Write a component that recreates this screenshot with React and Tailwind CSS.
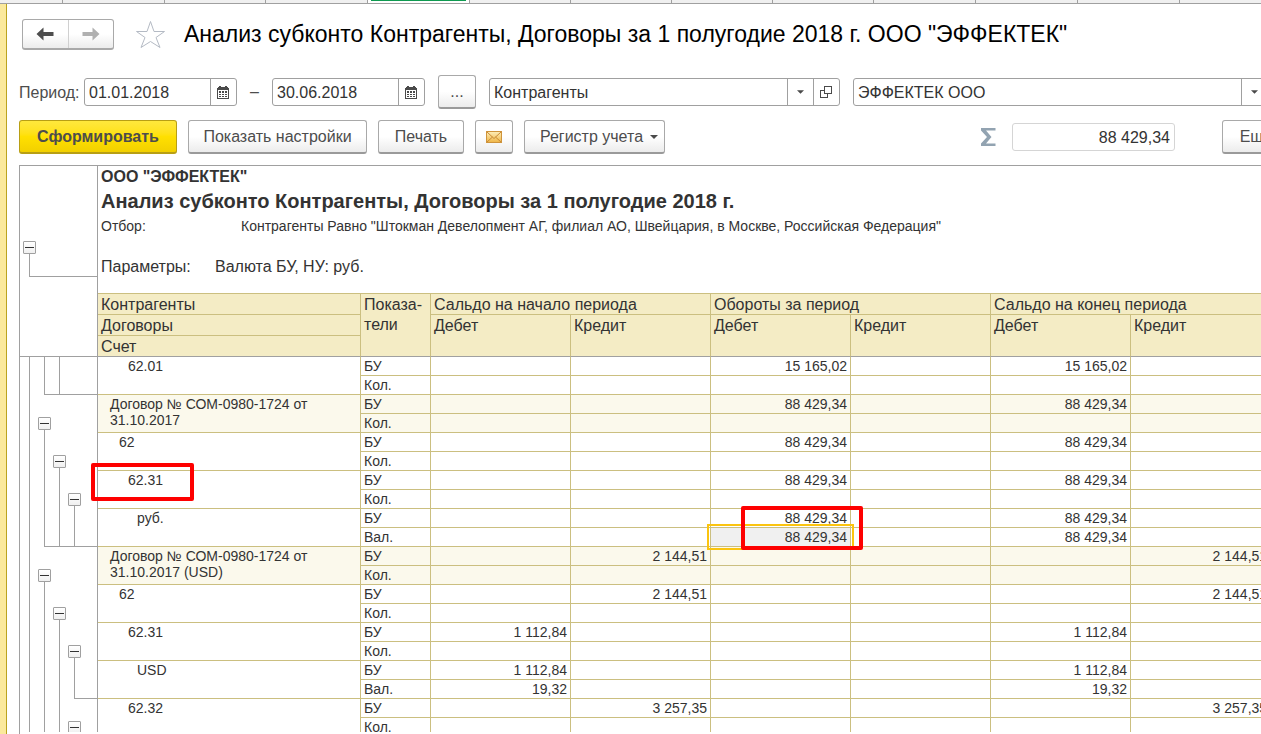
import React from 'react';

const tabs = [62, 101, 100, 101, 101, 100, 100, 100, 100, 101, 101, 101, 101];

const raised =
  'flex shrink-0 items-center justify-center rounded-[3px] border border-[#a9a9a9] border-b-2 border-b-[#9a9a9a] bg-linear-to-b from-white from-50% to-[#ececec] text-[#4d4d4d]';

function ArrowIcon({ className, flip }) {
  return (
    <svg viewBox="0 0 18 14" className={className} width="18" height="14" aria-hidden="true">
      <path
        d="M0.5 7 L7.5 0.5 V5 H17.5 V9 H7.5 V13.5 Z"
        fill="currentColor"
        transform={flip ? 'translate(18 0) scale(-1 1)' : undefined}
      />
    </svg>
  );
}

function CalendarIcon() {
  return (
    <svg width="12" height="13" viewBox="0 0 12 13" fill="#4a4a4a" shapeRendering="crispEdges" aria-hidden="true">
      <path d="M0 2h1V1h1V0h2v1h4V0h2v1h1v1h1v11H0z" />
      <path d="M1 4h10v8H1z" fill="#fff" />
      <path d="M2 5h2v2H2zM5 5h2v2H5zM8 5h2v2H8zM2 8h2v1H2zM5 8h2v1H5zM8 8h2v1H8zM2 10h2v1H2zM5 10h2v1H5zM8 10h2v1H8z" />
    </svg>
  );
}

function Caret({ small }) {
  return (
    <svg width={small ? 7 : 8} height="4" viewBox="0 0 8 4" fill="#4a4a4a" aria-hidden="true">
      <path d="M0 0h8L4 4z" />
    </svg>
  );
}

function OpenIcon() {
  return (
    <svg width="12" height="12" viewBox="0 0 12 12" fill="none" stroke="#4a4a4a" shapeRendering="crispEdges" aria-hidden="true">
      <path d="M4.5 0.5h7v7h-7zM4 4.5H0.500v7h7V8" />
    </svg>
  );
}

function MailIcon() {
  return (
    <svg width="16" height="12" viewBox="0 0 16 12" aria-hidden="true">
      <defs>
        <linearGradient id="mail" x1="0" y1="0" x2="0" y2="1">
          <stop offset="0" stopColor="#fdeeba" />
          <stop offset="1" stopColor="#efb545" />
        </linearGradient>
      </defs>
      <rect x="0.500" y="0.500" width="15" height="11" fill="url(#mail)" stroke="#cf943b" />
      <path d="M1 1l7 6.500L15 1M1 11l5.500-5M15 11l-5.500-5" fill="none" stroke="#c98a35" />
    </svg>
  );
}

function DateField({ id, value, label }) {
  return (
    <div className="flex h-[28px] w-[153px] shrink-0 rounded-[3px] border border-[#a0a0a0] bg-white">
      <input id={id} aria-label={label} defaultValue={value} className="w-0 min-w-0 flex-1 px-1 pt-px text-[16px] text-[#333] outline-none" />
      <button type="button" aria-label="Выбрать дату" className="flex w-[26px] items-center justify-center border-l border-[#a0a0a0] pr-px">
        <CalendarIcon />
      </button>
    </div>
  );
}

function Combo({ label, value, open, className }) {
  return (
    <div className={'flex h-[28px] shrink-0 rounded-[3px] border border-[#a0a0a0] bg-white ' + className}>
      <div className="grid min-w-0 flex-1 grid-cols-[1fr_26px]">
        <select aria-label={label} className="col-span-2 col-start-1 row-start-1 appearance-none px-1 pt-px text-[16px] text-[#333] outline-none">
          <option>{value}</option>
        </select>
        <span className="pointer-events-none col-start-2 row-start-1 flex items-center justify-center border-l border-[#a0a0a0]">
          <Caret small />
        </span>
      </div>
      {open && (
        <button type="button" aria-label="Открыть" className="flex w-[26px] items-center justify-center border-l border-[#a0a0a0] pr-px">
          <OpenIcon />
        </button>
      )}
    </div>
  );
}

function Toggle() {
  return (
    <button
      type="button"
      aria-label="Свернуть группу"
      className="flex size-[13px] shrink-0 items-center justify-center rounded-[1px] border border-[#a0a0a0] bg-linear-to-b from-white to-[#f0f0f0]"
    >
      <span className="h-px w-[9px] bg-[#333]" />
    </button>
  );
}

/* Tree slots: "|" line, "T" toggle, "L" line ending in a corner, "+" line crossing the foot, "_" foot only, " " empty */
function Slot({ kind }) {
  if (kind === 'T') {
    return (
      <div className="flex w-[15px] flex-col items-center justify-end">
        <Toggle />
        <span className="h-[3px] w-px bg-[#a0a0a0]" />
      </div>
    );
  }
  const foot = kind === '+' || kind === '_';
  return (
    <div className="flex w-[15px]">
      <span className={'w-[7px] ' + (foot ? 'border-b border-[#a0a0a0]' : '')} />
      <span
        className={
          'w-[8px] border-[#a0a0a0] ' +
          (kind === '|' || kind === 'L' || kind === '+' ? 'border-l ' : '') +
          (foot || kind === 'L' ? 'border-b' : '')
        }
      />
    </div>
  );
}

function Tree({ slots }) {
  const foot = /[L+_]/.test(slots);
  return (
    <div className="flex h-[38px] pl-[2px]">
      {slots.split('').map((kind, i) => (
        <Slot key={i} kind={kind} />
      ))}
      <span className={'flex-1 ' + (foot ? 'border-b border-[#a0a0a0]' : '')} />
    </div>
  );
}

const A = '88 429,34';
const B = '2 144,51';
const C = '1 112,84';

const rows = [
  { tree: '|L+_', name: '62.01', pad: 'pl-[30px]', unit: 'Кол.', top: ['', '', '15 165,02', '', '15 165,02', ''] },
  { tree: '|T  ', name: 'Договор № СОМ-0980-1724 от 31.10.2017', pad: 'pl-[12px] pr-[40px]', tint: true, unit: 'Кол.', top: ['', '', A, '', A, ''] },
  { tree: '||T ', name: '62', pad: 'pl-[21px]', unit: 'Кол.', top: ['', '', A, '', A, ''] },
  { tree: '|||T', name: '62.31', pad: 'pl-[30px]', unit: 'Кол.', marked: true, top: ['', '', A, '', A, ''] },
  { tree: '|L++', name: 'руб.', pad: 'pl-[39px]', unit: 'Вал.', selected: true, top: ['', '', A, '', A, ''], bottom: ['', '', A, '', A, ''] },
  { tree: '|T  ', name: 'Договор № СОМ-0980-1724 от 31.10.2017 (USD)', pad: 'pl-[12px] pr-[40px]', tint: true, unit: 'Кол.', top: ['', B, '', '', '', B] },
  { tree: '||T ', name: '62', pad: 'pl-[21px]', unit: 'Кол.', top: ['', B, '', '', '', B] },
  { tree: '|||T', name: '62.31', pad: 'pl-[30px]', unit: 'Кол.', top: [C, '', '', '', C, ''] },
  { tree: '|||L', name: 'USD', pad: 'pl-[39px]', unit: 'Вал.', top: [C, '', '', '', C, ''], bottom: ['19,32', '', '', '', '19,32', ''] },
  { tree: '|||T', name: '62.32', pad: 'pl-[30px]', unit: 'Кол.', top: ['', '3 257,35', '', '', '', '3 257,35'] },
];

const empty = ['', '', '', '', '', ''];
const line = 'border-r border-b border-[#cbbf80] ';
const head = 'border-r border-b border-[#cbbf80] bg-[#f4ecc5] px-[3px] pt-[2px] pb-0 text-left align-top font-normal text-[16px] leading-[18px] ';

function Group({ row }) {
  const tint = row.tint ? 'bg-[#fbf9ec] ' : '';
  const cell = line + tint + 'h-[19px] p-0 px-[3px] text-right align-top leading-[18px] whitespace-nowrap ';
  return (
    <>
      <tr>
        <td rowSpan={2} className="border-r border-[#a0a0a0] p-0 align-top">
          <Tree slots={row.tree} />
        </td>
        <td rowSpan={2} className={line + tint + row.pad + ' relative py-px align-top leading-[16px]'}>
          {row.name}
          {row.marked && <span className="pointer-events-none absolute -top-2 -left-[7px] z-10 h-[38px] w-[103px] rounded-[2px] border-4 border-[#fe0000]" />}
        </td>
        <td className={line + tint + 'h-[19px] p-0 pl-[3px] align-top leading-[18px]'}>БУ</td>
        {row.top.map((v, i) => (
          <td key={i} className={cell + (row.selected && i === 2 ? 'relative' : '')}>
            {v}
            {row.selected && i === 2 && (
              <span className="pointer-events-none absolute -top-[3px] left-[30px] z-20 h-[44px] w-[122px] rounded-[2px] border-4 border-[#fe0000]" />
            )}
          </td>
        ))}
      </tr>
      <tr>
        <td className={line + tint + 'h-[19px] p-0 pl-[3px] align-top leading-[18px]'}>{row.unit}</td>
        {(row.bottom || empty).map((v, i) => (
          <td key={i} className={cell + (row.selected && i === 2 ? 'relative bg-[#f0f0f0]' : '')}>
            {v}
            {row.selected && i === 2 && (
              <span className="pointer-events-none absolute -top-1 -left-1 z-10 h-[26px] w-[147px] border-2 border-[#fbc40f]" />
            )}
          </td>
        ))}
      </tr>
    </>
  );
}

function Report() {
  return (
    <table className="w-[1251px] table-fixed border-separate border-spacing-0 text-[14px] text-[#333]">
      <colgroup>
        <col className="w-[78px]" />
        <col className="w-[263px]" />
        <col className="w-[70px]" />
        {empty.map((_, i) => (
          <col key={i} className="w-[140px]" />
        ))}
      </colgroup>
      <thead>
        <tr>
          <td rowSpan={4} className="border-r border-b border-[#a0a0a0] p-0 align-top">
            <div className="flex flex-col pt-[75px] pl-[3px]">
              <Toggle />
              <span className="ml-[6px] h-[23px] border-b border-l border-[#a0a0a0]" />
            </div>
          </td>
          <td colSpan={8} className="h-[128px] border-b border-[#cbbf80] p-0 pl-[3px] align-top whitespace-nowrap">
            <p className="text-[16px] leading-[22px] font-bold">ООО "ЭФФЕКТЕК"</p>
            <h2 className="text-[20px] leading-[26px] font-bold">Анализ субконто Контрагенты, Договоры за 1 полугодие 2018 г.</h2>
            <p className="flex leading-[24px]">
              <span className="w-[140px]">Отбор:</span>
              Контрагенты Равно "Штокман Девелопмент АГ, филиал АО, Швейцария, в Москве, Российская Федерация"
            </p>
            <p className="flex pt-[18px] text-[16px] leading-[22px]">
              <span className="w-[114px]">Параметры:</span>
              Валюта БУ, НУ: руб.
            </p>
          </td>
        </tr>
        <tr>
          <th className={head + 'h-[21px]'}>Контрагенты</th>
          <th rowSpan={3} className={head + 'border-b-[#a0a0a0]'}>
            <span className="block pb-[2px]">Показа-</span>
            <span className="block">тели</span>
          </th>
          <th colSpan={2} className={head}>Сальдо на начало периода</th>
          <th colSpan={2} className={head}>Обороты за период</th>
          <th colSpan={2} className={head}>Сальдо на конец периода</th>
        </tr>
        <tr>
          <th className={head + 'h-[21px]'}>Договоры</th>
          {empty.map((_, i) => (
            <th key={i} rowSpan={2} className={head + 'border-b-[#a0a0a0]'}>
              {i % 2 ? 'Кредит' : 'Дебет'}
            </th>
          ))}
        </tr>
        <tr>
          <th className={head + 'h-[21px] border-b-[#a0a0a0]'}>Счет</th>
        </tr>
      </thead>
      <tbody>
        {rows.map((row, i) => (
          <Group key={i} row={row} />
        ))}
      </tbody>
    </table>
  );
}

export default function App() {
  return (
    <div className="flex h-screen flex-col overflow-hidden bg-white font-['Liberation_Sans',Arial,sans-serif]">
      <div className="flex h-[4px] shrink-0 overflow-hidden border-b border-[#a0a0a0] bg-[#f0f0f0]">
        {tabs.map((w, i) => (
          <span
            key={i}
            style={{ width: w + 1 }}
            className={'shrink-0 border-r border-[#a0a0a0] ' + (i === 4 ? 'bg-white px-[3px]' : '')}
          >
            {i === 4 && <span className="block h-px bg-[#0e9a50]" />}
          </span>
        ))}
      </div>

      <div className="flex min-h-0 flex-1 overflow-hidden border-l-[6px] border-[#fbe99c]">
        <main className="flex min-w-0 flex-1 flex-col border-l border-[#bba31f] pl-[12px]">
          <header className="flex h-[60px] shrink-0 items-center pl-[3px]">
            <div className="flex h-[31px] w-[92px] rounded-[3px] border border-b-2 border-[#a9a9a9] bg-linear-to-b from-white from-50% to-[#ececec]">
              <button type="button" aria-label="Назад" className="flex flex-1 items-center justify-center border-r border-[#d0d0d0]">
                <ArrowIcon className="text-[#4d4d4d]" />
              </button>
              <button type="button" aria-label="Вперед" className="flex flex-1 items-center justify-center">
                <ArrowIcon flip className="text-[#b0b0b0]" />
              </button>
            </div>
            <button type="button" aria-label="В избранное" className="ml-[21px]">
              <svg width="31" height="29" viewBox="0 0 31 29" fill="none" stroke="#b4bac4" aria-hidden="true">
                <path d="M15.500 1.500L19 11.500H29.500L21 17.500L25 27.500L15.500 21.500L6 27.500L10 17.500L1.500 11.500H12z" />
              </svg>
            </button>
            <h1 className="ml-[18px] text-[23px] whitespace-nowrap text-black">
              Анализ субконто Контрагенты, Договоры за 1 полугодие 2018 г. ООО "ЭФФЕКТЕК"
            </h1>
          </header>

          <div className="flex h-[56px] shrink-0 items-center text-[16px] text-[#4d4d4d]">
            <label htmlFor="from" className="w-[65px] shrink-0 pt-px">Период:</label>
            <DateField id="from" value="01.01.2018" label="Период с" />
            <span className="w-[35px] shrink-0 text-center">–</span>
            <DateField id="to" value="30.06.2018" label="Период по" />
            <button type="button" className={raised + ' ml-[13px] h-[34px] w-[38px]'}>...</button>
            <Combo label="Вид субконто" value="Контрагенты" open className="ml-[13px] w-[351px]" />
            <Combo label="Организация" value="ЭФФЕКТЕК ООО" className="ml-[13px] w-[415px]" />
          </div>

          <div className="flex h-[34px] shrink-0 gap-[11px] text-[16px] whitespace-nowrap">
            <button
              type="button"
              className="flex w-[158px] shrink-0 items-center justify-center rounded-[3px] border border-b-2 border-[#b89f14] bg-linear-to-b from-[#ffe83c] via-[#ffe000] to-[#f2d000] font-bold text-[#4d4d4d]"
            >
              Сформировать
            </button>
            <button type="button" className={raised + ' w-[179px]'}>Показать настройки</button>
            <button type="button" className={raised + ' w-[86px]'}>Печать</button>
            <button type="button" aria-label="Отправить по почте" className={raised + ' w-[38px]'}>
              <MailIcon />
            </button>
            <button type="button" className={raised + ' w-[141px] gap-[7px] pl-[9px]'}>
              Регистр учета
              <Caret />
            </button>
            <label htmlFor="sum" className="ml-[304px] flex w-[21px] shrink-0 items-center pl-px" aria-label="Сумма">
              <svg width="15" height="18" viewBox="0 0 15 18" fill="#92a3b1" aria-hidden="true">
                <path d="M0 0h14.500v2.500H5L10.500 9L5 15.500h9.500V18H0v-2.500L6 9L0 2.500z" />
              </svg>
            </label>
            <input
              id="sum"
              readOnly
              defaultValue="88 429,34"
              className="mt-[3px] h-[28px] w-[163px] shrink-0 rounded-[3px] border border-[#d5d5d5] px-1 pt-px text-right text-[#333] outline-none"
            />
            <button type="button" className={raised + ' ml-[36px] w-[68px]'}>Ещё</button>
          </div>

          <section className="mt-[11px] min-h-0 flex-1 border-t border-l border-[#a0a0a0] pb-[2px]">
            <div className="h-full overflow-hidden">
              <Report />
            </div>
          </section>
        </main>
      </div>
    </div>
  );
}
